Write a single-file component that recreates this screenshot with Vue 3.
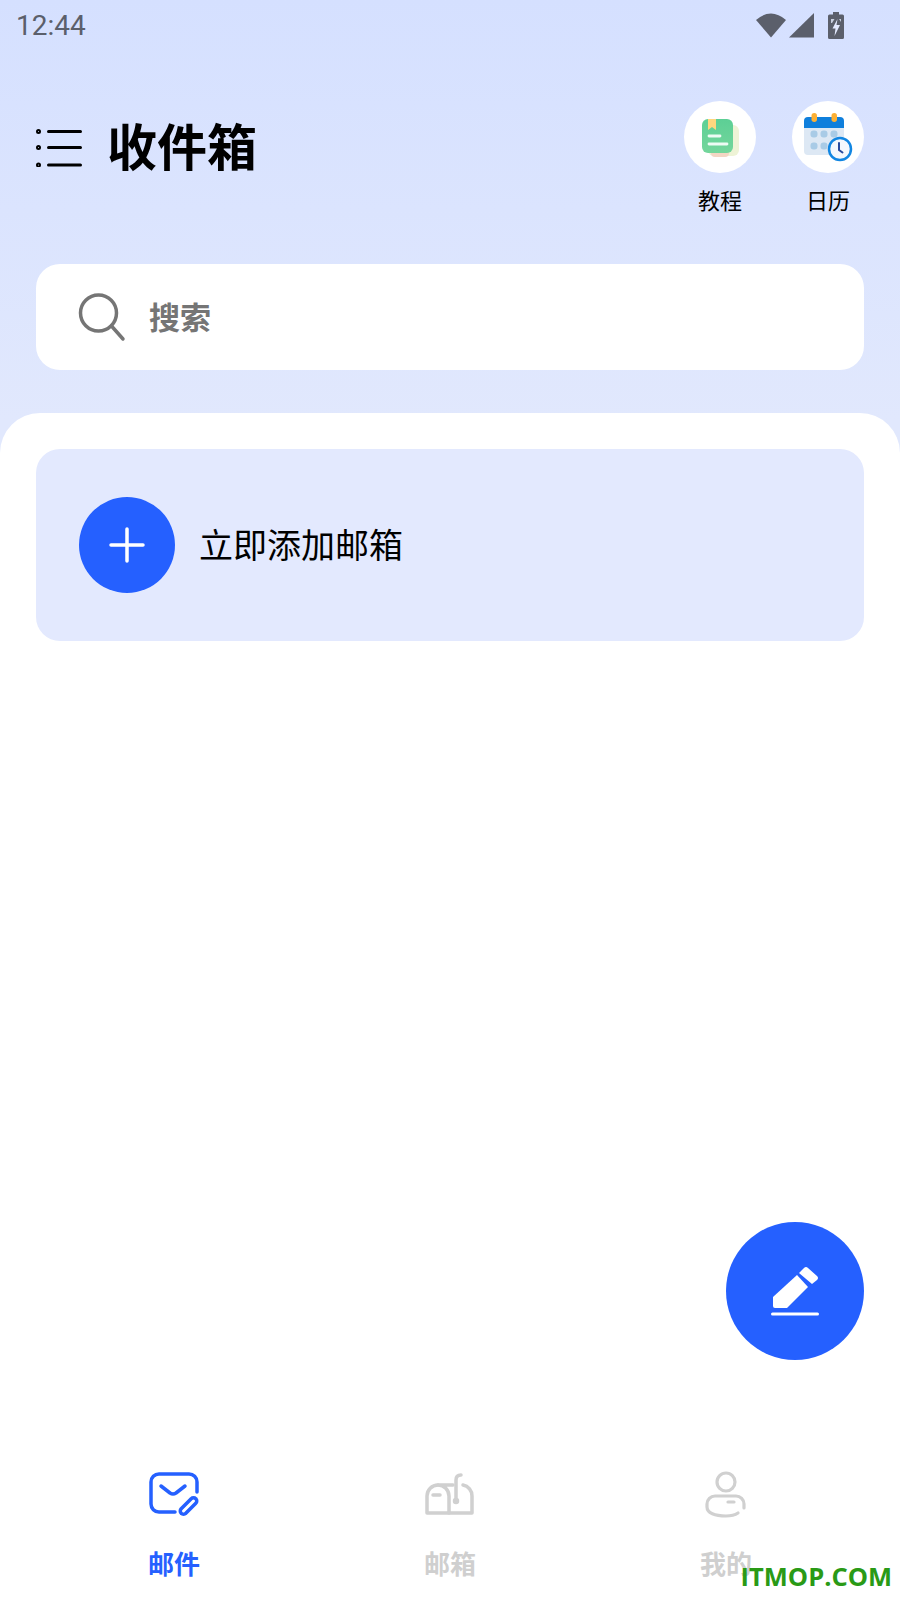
<template>
  <div class="page">
    <!-- Status bar -->
    <div class="status-bar">
      <span class="time">12:44</span>
      <div class="status-icons">
        <svg class="ic-wifi" width="30" height="26" viewBox="0 0 30 26" fill="#5b5f6b">
          <path d="M0 8Q15 -5 30 8L15 25.500Z"/>
        </svg>
        <svg class="ic-signal" width="25" height="26" viewBox="0 0 25 26" fill="#5b5f6b">
          <path d="M0 25.500L25 1V25.500Z"/>
        </svg>
        <svg class="ic-battery" width="16" height="27" viewBox="0 0 16 27">
          <path d="M5 0H11V2.500H14.500Q16 2.500 16 4V25.500Q16 27 14.500 27H1.500Q0 27 0 25.500V4Q0 2.500 1.500 2.500H5Z" fill="#5b5f6b"/>
          <path d="M9.500 7L4.500 16.500H7.500L6.500 24L12 13H8.500Z" fill="#e4eaff"/>
          <path d="M3 7H6.500L4 11H3ZM11 7H13V10Z" fill="#c9cfdf"/>
        </svg>
      </div>
    </div>

    <!-- Header -->
    <div class="header">
      <div class="title-group">
        <svg width="46" height="40" viewBox="0 0 46 40" fill="none" stroke="#000" stroke-width="3" stroke-linecap="round">
          <path d="M12.500 4.500H44.500M12.500 20.500H44.500M12.500 38H44.500" />
          <circle cx="2.500" cy="4.500" r="1" />
          <circle cx="2.500" cy="20.500" r="1" />
          <circle cx="2.500" cy="38" r="1" />
        </svg>
        <h1 class="title">收件箱</h1>
      </div>
      <div class="shortcuts">
        <div class="shortcut">
          <div class="shortcut-circle">
            <svg width="72" height="72" viewBox="0 0 72 72">
              <defs>
                <linearGradient id="bookFill" x1="0" y1="0" x2="0" y2="1">
                  <stop offset="0" stop-color="#5ccf95"/>
                  <stop offset="1" stop-color="#74d69c"/>
                </linearGradient>
              </defs>
              <rect x="24" y="24" width="31" height="31" rx="6" fill="#eef3d6"/>
              <rect x="27" y="48" width="18" height="8" rx="4" fill="#f3d6c4"/>
              <rect x="18" y="18" width="31" height="34" rx="6" fill="url(#bookFill)"/>
              <path d="M24 18H32V29L28 26L24 29Z" fill="#ffd77f"/>
              <path d="M25 35H36M25 43H43" stroke="#eefbf4" stroke-width="2.800" stroke-linecap="round"/>
            </svg>
          </div>
          <span class="shortcut-label">教程</span>
        </div>
        <div class="shortcut">
          <div class="shortcut-circle">
            <svg width="72" height="72" viewBox="0 0 72 72">
              <path d="M12 26H52V50Q52 54 48 54H16Q12 54 12 50Z" fill="#dde8f4"/>
              <path d="M12 27V20Q12 16 16 16H48Q52 16 52 20V27Z" fill="#0f7fdc"/>
              <rect x="19.500" y="12" width="5.500" height="9" rx="2.700" fill="#fdb033"/>
              <rect x="39.500" y="12" width="5.500" height="9" rx="2.700" fill="#fdb033"/>
              <g fill="#a9cbe6">
                <rect x="18.500" y="29.500" width="7" height="7" rx="3"/>
                <rect x="28.500" y="29.500" width="7" height="7" rx="3"/>
                <rect x="38.500" y="29.500" width="7" height="7" rx="3"/>
                <rect x="18.500" y="41.500" width="7" height="7" rx="3"/>
                <rect x="28.500" y="41.500" width="7" height="7" rx="3"/>
              </g>
              <circle cx="48" cy="48" r="11" fill="#f3f8fd" stroke="#1186e2" stroke-width="2.500"/>
              <path d="M47 42V49L50.500 51.500" fill="none" stroke="#274a9e" stroke-width="2" stroke-linecap="round"/>
            </svg>
          </div>
          <span class="shortcut-label">日历</span>
        </div>
      </div>
    </div>

    <!-- Search -->
    <div class="search">
      <svg width="48" height="50" viewBox="0 0 48 50" fill="none" stroke="#757575" stroke-width="3.500" stroke-linecap="round">
        <circle cx="20.500" cy="21" r="18"/>
        <path d="M33.500 34L45 47"/>
      </svg>
      <span class="search-text">搜索</span>
    </div>

    <!-- Sheet -->
    <div class="sheet">
      <div class="add-card">
        <div class="add-circle">
          <svg width="36" height="36" viewBox="0 0 36 36" stroke="#fff" stroke-width="3.500" stroke-linecap="round">
            <path d="M18 2V34M2 18H34"/>
          </svg>
        </div>
        <span class="add-text">立即添加邮箱</span>
      </div>

      <div class="tabs">
        <div class="tab active">
          <svg width="50" height="48" viewBox="0 0 50 48" fill="none" stroke="#2560ff" stroke-width="3.500" stroke-linecap="round" stroke-linejoin="round">
            <path d="M26 42H10A8 8 0 0 1 2 34V12A8 8 0 0 1 10 4H40A8 8 0 0 1 48 12V22"/>
            <path d="M12 16L21 23Q24 25 27 23L36 16"/>
            <path d="M34.500 41L44.500 31" stroke-width="10"/>
            <path d="M34.500 41L44.500 31" stroke="#fff" stroke-width="3"/>
          </svg>
          <span class="tab-label">邮件</span>
        </div>
        <div class="tab">
          <svg width="50" height="48" viewBox="0 0 50 48" fill="none" stroke="#d0d0d0" stroke-width="3.500" stroke-linecap="round" stroke-linejoin="round">
            <path d="M13 15A11 11 0 0 0 2 26V43H47V26A11 11 0 0 0 38 15"/>
            <path d="M13 15H28M13 15A11 11 0 0 1 24 26V43"/>
            <path d="M8 25H15"/>
            <path d="M31 31V10Q31 5 36 5"/>
            <circle cx="31" cy="31" r="1.500"/>
          </svg>
          <span class="tab-label">邮箱</span>
        </div>
        <div class="tab">
          <svg width="50" height="48" viewBox="0 0 50 48" fill="none" stroke="#d0d0d0" stroke-width="3.200" stroke-linecap="round" stroke-linejoin="round">
            <circle cx="25" cy="12" r="9"/>
            <path d="M43 38V34A8 8 0 0 0 35 26H14A8 8 0 0 0 6 34V37C6 43 14 46 25 46C30 46 34 45 37 43"/>
            <path d="M27 32H33"/>
          </svg>
          <span class="tab-label">我的</span>
        </div>
      </div>
    </div>

    <!-- Floating compose button -->
    <div class="fab">
      <svg width="138" height="138" viewBox="0 0 138 138" fill="#fff">
        <path d="M47 75L71 53L82 65L61 86H49Q47 86 47 84Z"/>
        <path d="M73 51L78 46Q80 44 82 46L91 54Q93 56 91 58L86 62Z"/>
        <path d="M46.500 92H91.500" stroke="#fff" stroke-width="3" stroke-linecap="round"/>
      </svg>
    </div>

    <span class="watermark">ITMOP.COM</span>
  </div>
</template>

<script setup>
</script>

<style scoped>
.page {
  position: relative;
  display: flex;
  flex-direction: column;
  width: 900px;
  height: 1600px;
  overflow: hidden;
  background: linear-gradient(180deg, #d5e0ff 0, #e1e8fd 420px) no-repeat;
  background-size: 100% 470px;
  background-color: #fff;
  font-family: "Noto Sans CJK SC", sans-serif;
}

.status-bar {
  display: flex;
  align-items: center;
  justify-content: space-between;
  height: 50px;
  padding: 0 56px 0 16px;
  flex-shrink: 0;
}

.time {
  font-family: Roboto, sans-serif;
  font-size: 28px;
  font-weight: 450;
  color: #5b5f6b;
}

.status-icons {
  display: flex;
  align-items: center;
}

.ic-signal {
  margin-left: 3px;
}

.ic-battery {
  margin-left: 14px;
}

.header {
  display: flex;
  justify-content: space-between;
  padding: 51px 36px 0;
}

.title-group {
  display: flex;
  align-items: center;
  height: 92px;
  gap: 25px;
}

.title {
  margin: 0 0 6px;
  font-size: 50px;
  font-weight: 700;
  line-height: 60px;
  color: #000;
}

.shortcuts {
  display: flex;
  gap: 36px;
}

.shortcut {
  display: flex;
  flex-direction: column;
  align-items: center;
}

.shortcut-circle {
  width: 72px;
  height: 72px;
  border-radius: 50%;
  background: #fff;
}

.shortcut-label {
  margin-top: 12px;
  font-size: 22px;
  line-height: 28px;
  color: #000;
}

.search {
  display: flex;
  align-items: center;
  gap: 23px;
  height: 106px;
  margin: 51px 36px 43px;
  padding-left: 42px;
  background: #fff;
  border-radius: 24px;
}

.search-text {
  padding-bottom: 4px;
  font-size: 31px;
  font-weight: 700;
  color: #757575;
}

.sheet {
  flex: 1;
  display: flex;
  flex-direction: column;
  padding-top: 36px;
  background: #fff;
  border-radius: 40px 40px 0 0;
}

.add-card {
  display: flex;
  align-items: center;
  gap: 24px;
  height: 192px;
  margin: 0 36px;
  padding-left: 43px;
  background: #e3e9fe;
  border-radius: 24px;
}

.add-circle {
  display: flex;
  align-items: center;
  justify-content: center;
  width: 96px;
  height: 96px;
  border-radius: 50%;
  background: #2560ff;
}

.add-text {
  padding-bottom: 4px;
  font-size: 34px;
  color: #000;
}

.tabs {
  display: grid;
  grid-template-columns: repeat(3, 1fr);
  margin-top: auto;
  padding: 0 36px 19px;
}

.tab {
  display: flex;
  flex-direction: column;
  align-items: center;
}

.tab-label {
  margin-top: 27px;
  font-size: 26px;
  font-weight: 700;
  line-height: 36px;
  color: #cfcfcf;
}

.tab.active .tab-label {
  color: #2560ff;
}

.fab {
  position: absolute;
  right: 36px;
  bottom: 240px;
  width: 138px;
  height: 138px;
  border-radius: 50%;
  background: #2560ff;
}

.watermark {
  position: absolute;
  right: 8px;
  bottom: 8px;
  font-family: "Open Sans", sans-serif;
  font-size: 25.500px;
  font-weight: 700;
  line-height: 32px;
  color: #2a9a16;
}
</style>
